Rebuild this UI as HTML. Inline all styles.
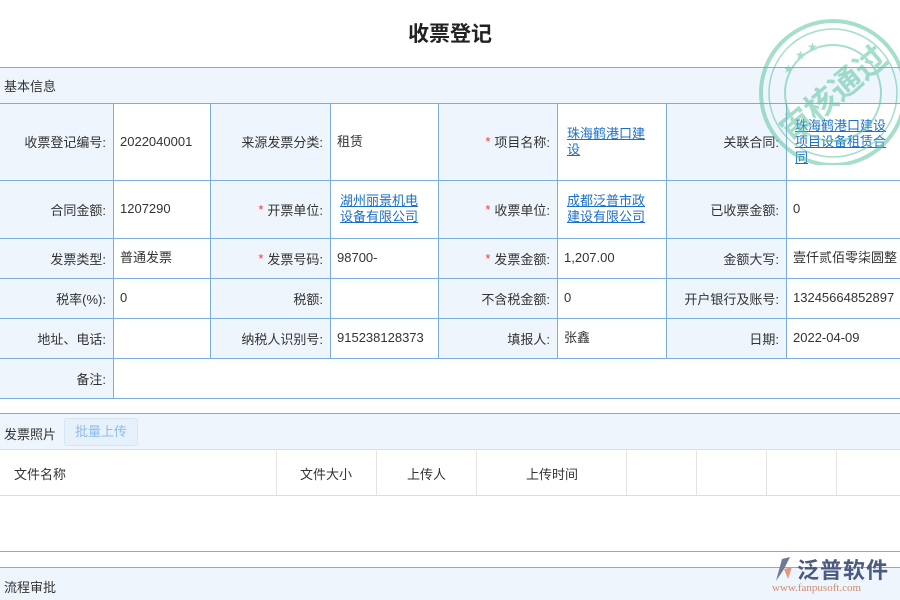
<!DOCTYPE html><html><head><meta charset="utf-8"><style>
*{margin:0;padding:0;box-sizing:border-box}
body{width:900px;height:600px;overflow:hidden;background:#fff;font-family:"Liberation Sans","Noto Sans CJK SC",sans-serif;font-size:13px;color:#333;position:relative}
.a{position:absolute}
.h{position:absolute;left:0;width:900px;height:1px;background:#7aaede}
.v{position:absolute;width:1px;background:#7aaede}
.l{position:absolute;background:#eff5fc;text-align:right;padding-right:7px;display:flex;align-items:center;justify-content:flex-end}
.c{position:absolute;display:flex;align-items:center;padding-left:7px;line-height:16px}
.s{color:#f33;margin-right:4px}
a{color:#1a6fc9;text-decoration:underline}
</style></head><body>
<div class="a" style="left:0;top:18px;width:900px;text-align:center;font-size:21px;font-weight:bold;color:#222">收票登记</div>
<div class="a" style="left:0;top:67px;width:900px;height:36px;background:#eff5fc"></div>
<div class="a" style="left:4px;top:76px">基本信息</div>
<div class="l" style="left:0;top:103px;width:113px;height:77px">收票登记编号:</div>
<div class="l" style="left:210px;top:103px;width:120px;height:77px">来源发票分类:</div>
<div class="l" style="left:438px;top:103px;width:119px;height:77px"><span class="s">*</span>项目名称:</div>
<div class="l" style="left:666px;top:103px;width:120px;height:77px">关联合同:</div>
<div class="l" style="left:0;top:180px;width:113px;height:58px">合同金额:</div>
<div class="l" style="left:210px;top:180px;width:120px;height:58px"><span class="s">*</span>开票单位:</div>
<div class="l" style="left:438px;top:180px;width:119px;height:58px"><span class="s">*</span>收票单位:</div>
<div class="l" style="left:666px;top:180px;width:120px;height:58px">已收票金额:</div>
<div class="l" style="left:0;top:238px;width:113px;height:40px">发票类型:</div>
<div class="l" style="left:210px;top:238px;width:120px;height:40px"><span class="s">*</span>发票号码:</div>
<div class="l" style="left:438px;top:238px;width:119px;height:40px"><span class="s">*</span>发票金额:</div>
<div class="l" style="left:666px;top:238px;width:120px;height:40px">金额大写:</div>
<div class="l" style="left:0;top:278px;width:113px;height:40px">税率(%):</div>
<div class="l" style="left:210px;top:278px;width:120px;height:40px">税额:</div>
<div class="l" style="left:438px;top:278px;width:119px;height:40px">不含税金额:</div>
<div class="l" style="left:666px;top:278px;width:120px;height:40px">开户银行及账号:</div>
<div class="l" style="left:0;top:318px;width:113px;height:40px">地址、电话:</div>
<div class="l" style="left:210px;top:318px;width:120px;height:40px">纳税人识别号:</div>
<div class="l" style="left:438px;top:318px;width:119px;height:40px">填报人:</div>
<div class="l" style="left:666px;top:318px;width:120px;height:40px">日期:</div>
<div class="l" style="left:0;top:358px;width:113px;height:40px">备注:</div>
<div class="c" style="left:113px;top:103px;height:77px">2022040001</div>
<div class="c" style="left:330px;top:103px;height:77px">租赁</div>
<div class="c" style="left:560px;top:103px;height:77px;width:88px;word-break:break-all"><a>珠海鹤港口建设</a></div>
<div class="c" style="left:788px;top:103px;height:77px;width:100px;word-break:break-all"><a>珠海鹤港口建设项目设备租赁合同</a></div>
<div class="c" style="left:113px;top:180px;height:58px">1207290</div>
<div class="c" style="left:333px;top:180px;height:58px;width:88px;word-break:break-all"><a>湖州丽景机电设备有限公司</a></div>
<div class="c" style="left:560px;top:180px;height:58px;width:88px;word-break:break-all"><a>成都泛普市政建设有限公司</a></div>
<div class="c" style="left:786px;top:180px;height:58px">0</div>
<div class="c" style="left:113px;top:238px;height:40px">普通发票</div>
<div class="c" style="left:330px;top:238px;height:40px">98700-</div>
<div class="c" style="left:557px;top:238px;height:40px">1,207.00</div>
<div class="c" style="left:786px;top:238px;height:40px;white-space:nowrap">壹仟贰佰零柒圆整</div>
<div class="c" style="left:113px;top:278px;height:40px">0</div>
<div class="c" style="left:557px;top:278px;height:40px">0</div>
<div class="c" style="left:786px;top:278px;height:40px;white-space:nowrap">13245664852897</div>
<div class="c" style="left:330px;top:318px;height:40px">915238128373</div>
<div class="c" style="left:557px;top:318px;height:40px">张鑫</div>
<div class="c" style="left:786px;top:318px;height:40px">2022-04-09</div>
<div class="h" style="top:67px"></div><div class="h" style="top:103px"></div><div class="h" style="top:180px"></div><div class="h" style="top:238px"></div><div class="h" style="top:278px"></div><div class="h" style="top:318px"></div><div class="h" style="top:358px"></div><div class="h" style="top:398px"></div>
<div class="v" style="left:113px;top:103px;height:295px"></div>
<div class="v" style="left:210px;top:103px;height:255px"></div>
<div class="v" style="left:330px;top:103px;height:255px"></div>
<div class="v" style="left:438px;top:103px;height:255px"></div>
<div class="v" style="left:557px;top:103px;height:255px"></div>
<div class="v" style="left:666px;top:103px;height:255px"></div>
<div class="v" style="left:786px;top:103px;height:255px"></div>
<div class="h" style="top:413px"></div>
<div class="a" style="left:0;top:414px;width:900px;height:36px;background:#eff5fc;border-bottom:1px solid #ddd"></div>
<div class="a" style="left:4px;top:424px">发票照片</div>
<div class="a" style="left:64px;top:418px;width:74px;height:28px;border:1px solid #d6e6f5;background:#e6f1fc;border-radius:3px;color:#8cbcea;text-align:center;line-height:26px">批量上传</div>
<div class="a" style="left:0;top:495px;width:900px;height:1px;background:#ddd"></div>
<div class="a" style="left:14px;top:464px">文件名称</div>
<div class="a" style="left:300px;top:464px">文件大小</div>
<div class="a" style="left:407px;top:464px">上传人</div>
<div class="a" style="left:526px;top:464px">上传时间</div>
<div class="a" style="left:276px;top:451px;width:1px;height:44px;background:#e3e3e3"></div>
<div class="a" style="left:376px;top:451px;width:1px;height:44px;background:#e3e3e3"></div>
<div class="a" style="left:476px;top:451px;width:1px;height:44px;background:#e3e3e3"></div>
<div class="a" style="left:626px;top:451px;width:1px;height:44px;background:#e3e3e3"></div>
<div class="a" style="left:696px;top:451px;width:1px;height:44px;background:#e3e3e3"></div>
<div class="a" style="left:766px;top:451px;width:1px;height:44px;background:#e3e3e3"></div>
<div class="a" style="left:836px;top:451px;width:1px;height:44px;background:#e3e3e3"></div>
<div class="h" style="top:551px"></div>
<div class="h" style="top:567px"></div>
<div class="a" style="left:0;top:568px;width:900px;height:32px;background:#eff5fc"></div>
<div class="a" style="left:4px;top:577px">流程审批</div>
<svg class="a" style="left:772px;top:555px" width="24" height="28" viewBox="0 0 24 28"><path d="M4 26 L10 4 L18 2 L12 14 Z" fill="#6b7a99"/><path d="M12 14 L20 12 L16 24 Z" fill="#e39a7a"/></svg>
<div class="a" style="left:797px;top:553px;font-size:22px;color:#4a5a80;font-weight:bold;letter-spacing:1px">泛普软件</div>
<div class="a" style="left:772px;top:582px;font-size:11px;color:#d08a70;font-family:'Liberation Serif',serif">www.fanpusoft.com</div>
<svg class="a" style="left:755px;top:15px" width="145" height="150" viewBox="0 0 145 150" opacity="0.55">
<circle cx="78" cy="78" r="72" fill="none" stroke="#5cc4a0" stroke-width="4"/>
<circle cx="78" cy="78" r="64" fill="none" stroke="#5cc4a0" stroke-width="1.5"/>
<circle cx="78" cy="78" r="48" fill="none" stroke="#5cc4a0" stroke-width="2"/>
<g fill="#5cc4a0" font-size="12" font-family="DejaVu Sans,sans-serif"><text x="28" y="58">★</text><text x="40" y="44">★</text><text x="52" y="36">★</text></g>
<text x="78" y="90" transform="rotate(-40 78 78)" text-anchor="middle" font-size="32" font-weight="bold" fill="#5cc4a0" font-family="Noto Sans CJK SC,sans-serif">审核通过</text>
</svg>
</body></html>
